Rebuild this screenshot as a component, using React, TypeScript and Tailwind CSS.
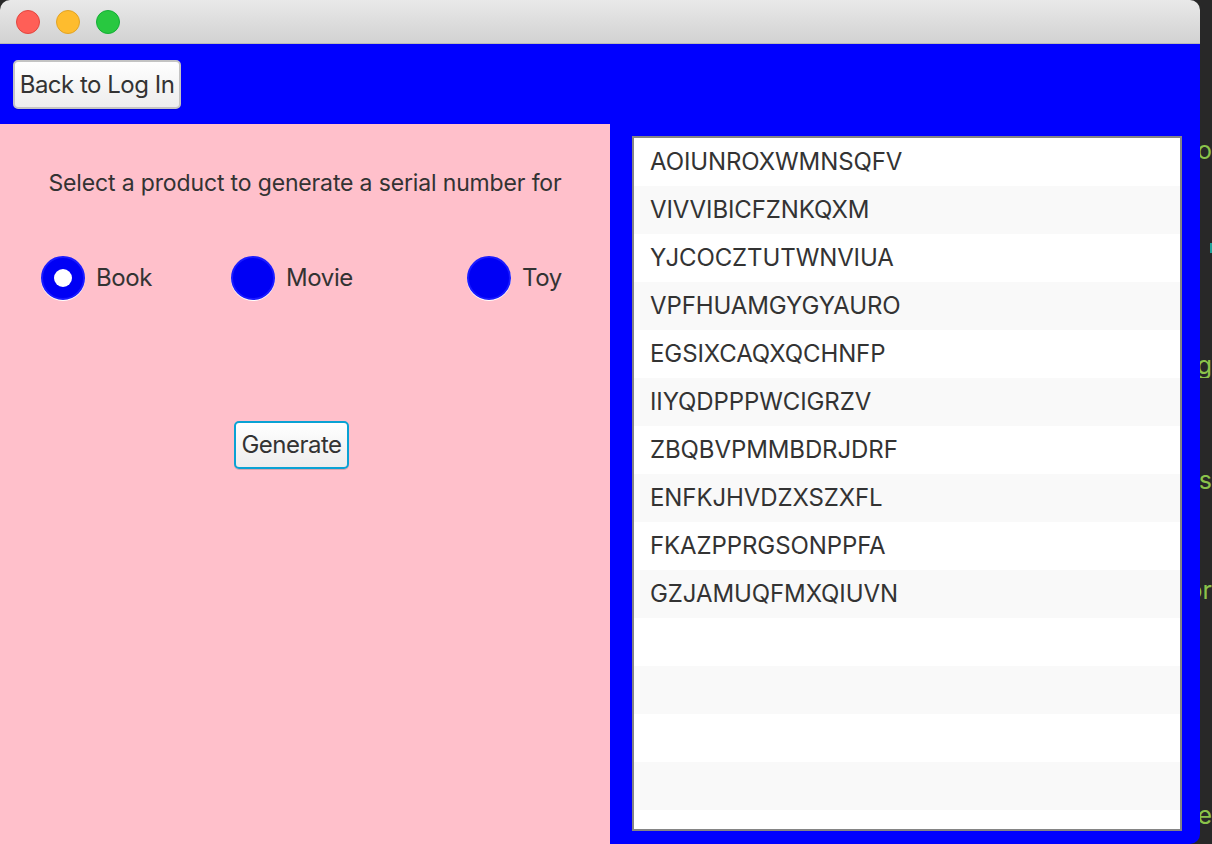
import type { ReactNode } from 'react'

const serials = [
  'AOIUNROXWMNSQFV',
  'VIVVIBICFZNKQXM',
  'YJCOCZTUTWNVIUA',
  'VPFHUAMGYGYAURO',
  'EGSIXCAQXQCHNFP',
  'IIYQDPPPWCIGRZV',
  'ZBQBVPMMBDRJDRF',
  'ENFKJHVDZXSZXFL',
  'FKAZPPRGSONPPFA',
  'GZJAMUQFMXQIUVN',
  '',
  '',
  '',
  '',
  '',
]

const font = { fontFamily: 'Inter, "Noto Sans", sans-serif' }

function Light({ color }: { color: string }) {
  return <div className={`h-[24px] w-[24px] rounded-full border ${color}`} />
}

function Radio({ label, checked, width }: { label: string; checked?: boolean; width: string }) {
  return (
    <div className={`flex items-center ${width}`}>
      <div className="grid h-[44px] w-[44px] place-items-center rounded-full border-2 border-[#1a1aff] bg-[#0000f5] shadow-[0_1px_0_#ffffff]">
        {checked && <div className="h-[18px] w-[18px] rounded-full bg-white" />}
      </div>
      <span className="ml-[11px] text-[24px] tracking-[-0.4px] text-[#333333]">{label}</span>
    </div>
  )
}

function Button({ children, focused, className }: { children: ReactNode; focused?: boolean; className: string }) {
  return (
    <div
      className={`flex items-center justify-center rounded-[5px] bg-gradient-to-b from-white to-[#ededed] text-[24px] tracking-[-0.5px] text-[#333333] shadow-[0_1px_0_rgba(0,0,0,0.15)] ${
        focused ? 'border-2 border-[#0aa2d4]' : 'border-2 border-[#c4c4c4]'
      } ${className}`}
    >
      {children}
    </div>
  )
}

export default function App() {
  return (
    <div className="flex h-[844px] w-[1212px] overflow-hidden bg-[#282828]" style={font}>
      <div className="flex h-[844px] w-[1200px] shrink-0 flex-col overflow-hidden rounded-t-[10px] rounded-br-[10px]">
        <div className="flex h-[44px] shrink-0 items-center gap-[16px] border-b border-[#b8b8b8] bg-gradient-to-b from-[#e9e9e9] to-[#d2d2d2] pl-[16px]">
          <Light color="border-[#e2463f] bg-[#ff5f57]" />
          <Light color="border-[#e1a325] bg-[#febc2e]" />
          <Light color="border-[#14ae36] bg-[#28c840]" />
        </div>

        <div className="flex h-[80px] shrink-0 items-start bg-[#0000ff] pl-[13px] pt-[16px]">
          <Button className="h-[49px] w-[168px]">Back to Log In</Button>
        </div>

        <div className="flex h-[720px] min-h-0 shrink-0">
          <div className="flex w-[610px] shrink-0 flex-col bg-[#ffc0cb]">
            <p className="mt-[42px] text-center text-[23px] tracking-[-0.15px] text-[#333333]">
              Select a product to generate a serial number for
            </p>
            <div className="mt-[55px] flex pl-[41px]">
              <Radio label="Book" checked width="w-[190px]" />
              <Radio label="Movie" width="w-[236px]" />
              <Radio label="Toy" width="w-[120px]" />
            </div>
            <div className="mt-[121px] pl-[234px]">
              <Button focused className="h-[48px] w-[115px]">Generate</Button>
            </div>
          </div>

          <div className="flex min-h-0 flex-1 flex-col bg-[#0000ff] pb-[13px] pl-[22px] pr-[18px] pt-[12px]">
            <div className="min-h-0 flex-1 overflow-hidden border-2 border-[#858585] bg-white">
              {serials.map((s, i) => (
                <div
                  key={i}
                  className={`flex h-[48px] items-center pl-[16px] text-[24px] tracking-[-0.1px] text-[#333333] ${
                    i % 2 === 1 ? 'bg-[#f9f9f9]' : 'bg-white'
                  }`}
                >
                  {s}
                </div>
              ))}
            </div>
          </div>
        </div>
      </div>

      <div className="flex w-[12px] shrink-0 flex-col text-[25px] leading-[26px] text-[#8bc34a]">
        <div className="mt-[137px] flex justify-end overflow-hidden whitespace-nowrap">Lo</div>
        <div className="mt-[80px] flex h-[14px] justify-end overflow-hidden">
          <div className="h-[10px] w-[2px] bg-[#1fa39a]" />
        </div>
        <div className="mt-[95px] flex justify-end overflow-hidden whitespace-nowrap">ng</div>
        <div className="mt-[89px] flex justify-end overflow-hidden whitespace-nowrap">rs</div>
        <div className="mt-[84px] flex justify-end overflow-hidden whitespace-nowrap">or</div>
        <div className="mt-[199px] flex justify-end overflow-hidden whitespace-nowrap">ie</div>
      </div>
    </div>
  )
}
